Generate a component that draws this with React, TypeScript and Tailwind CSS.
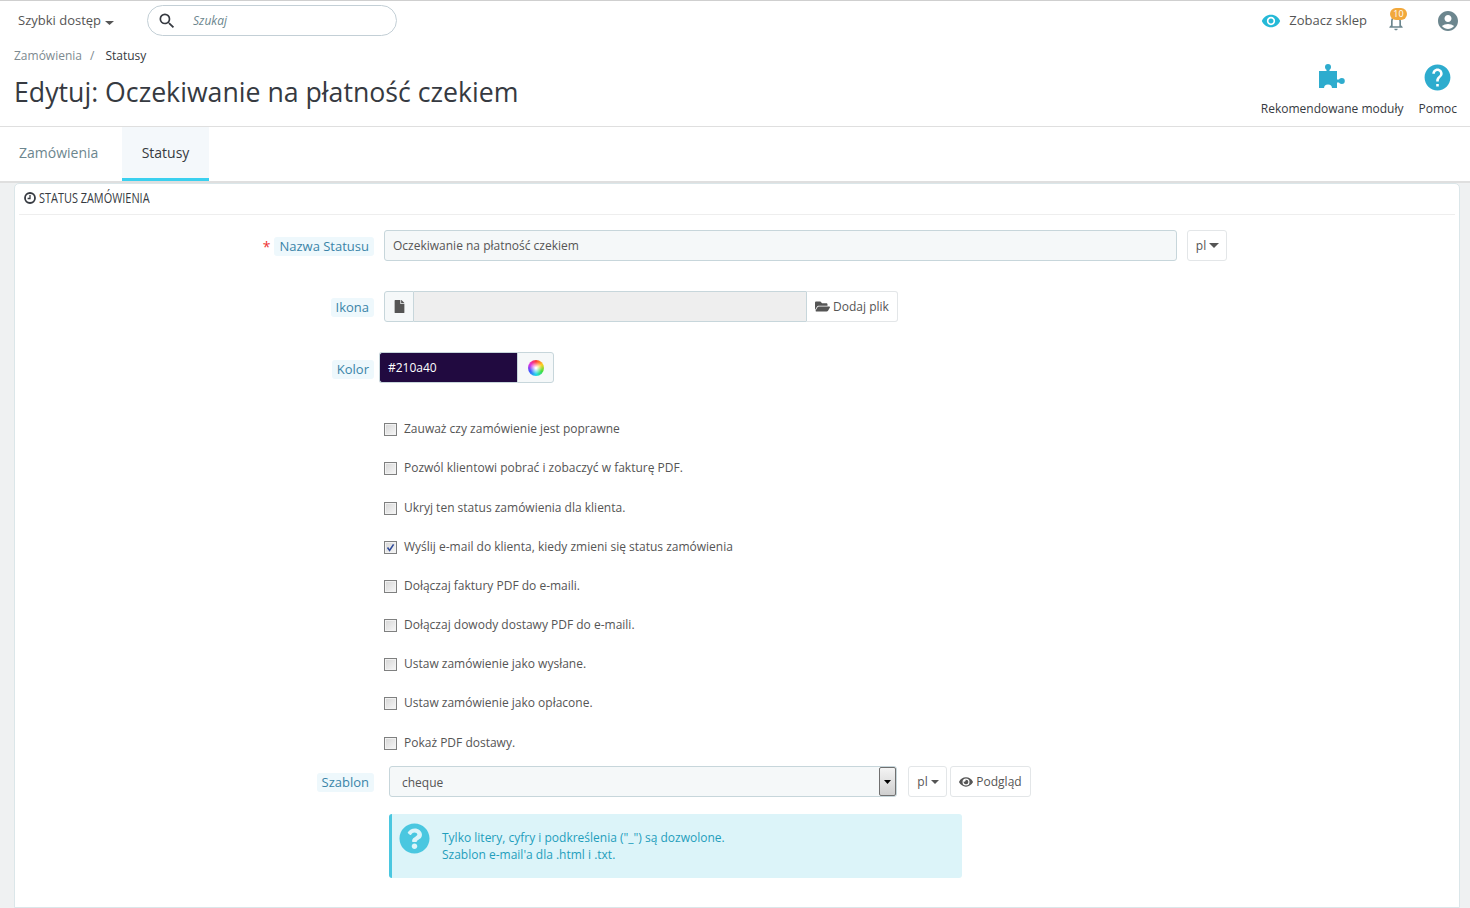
import { FaEye, FaFile, FaFolderOpen, FaQuestionCircle } from "react-icons/fa";
import { MdAccountCircle, MdHelp, MdNotificationsNone, MdRemoveRedEye, MdSearch } from "react-icons/md";

const options = [
  { label: "Zauważ czy zamówienie jest poprawne", gap: "mt-0" },
  { label: "Pozwól klientowi pobrać i zobaczyć w fakturę PDF.", gap: "mt-[25px]" },
  { label: "Ukryj ten status zamówienia dla klienta.", gap: "mt-[26px]" },
  { label: "Wyślij e-mail do klienta, kiedy zmieni się status zamówienia", gap: "mt-[25px]", checked: true },
  { label: "Dołączaj faktury PDF do e-maili.", gap: "mt-[25px]" },
  { label: "Dołączaj dowody dostawy PDF do e-maili.", gap: "mt-[25px]" },
  { label: "Ustaw zamówienie jako wysłane.", gap: "mt-[25px]" },
  { label: "Ustaw zamówienie jako opłacone.", gap: "mt-[25px]" },
  { label: "Pokaż PDF dostawy.", gap: "mt-[26px]" },
];

function Caret({ className }: { className: string }) {
  return (
    <svg viewBox="0 0 10 5" preserveAspectRatio="none" className={className} fill="currentColor">
      <path d="M0 0H10L5 5Z" />
    </svg>
  );
}

function FieldLabel({ children }: { children: string }) {
  return (
    <span className="rounded-[3px] bg-[#eef8fc] px-[5px] text-[13px] leading-[19px] text-[#3a84a8]">{children}</span>
  );
}

function CheckRow({ label, checked, gap }: { label: string; checked?: boolean; gap: string }) {
  return (
    <div className={`flex h-[14px] items-center ${gap}`}>
      <span className="relative h-[13px] w-[13px] shrink-0 border border-[#7f8080] bg-gradient-to-br from-[#d6d6d6] to-[#f7f7f7] shadow-[inset_0_0_0_1px_#f2f2f2]">
        {checked && (
          <svg viewBox="0 0 11 11" className="absolute inset-0 h-[11px] w-[11px]">
            <path d="M2.5 5.5 L4.6 8.4 L8.6 2.4" fill="none" stroke="#2e4a9a" strokeWidth="1.6" />
          </svg>
        )}
      </span>
      <span className="ml-[7px] whitespace-nowrap text-[12px] text-[#555]">{label}</span>
    </div>
  );
}

export default function App() {
  return (
    <div className="h-[908px] overflow-hidden bg-white font-['Open_Sans',sans-serif] text-[#363a41]">
      {/* pasek górny */}
      <div className="border-t border-t-[#cfcfcf]">
        <div className="flex h-[40px] items-center pl-[18px] pr-[10px]">
          <button className="flex items-center text-[13px] text-[#555]">
            Szybki dostęp
            <Caret className="ml-[4px] mt-[3px] h-[4px] w-[9px] text-[#555]" />
          </button>
          <div className="-mt-[1px] ml-[33px] flex h-[31px] w-[250px] items-center rounded-full border border-[#c3cfd6] bg-white pl-[9px]">
            <MdSearch className="h-[20px] w-[20px] text-[#363a41]" />
            <span className="ml-[16px] text-[12px] italic text-[#6c868e]">Szukaj</span>
          </div>
          <div className="ml-auto flex items-center">
            <MdRemoveRedEye className="h-[20px] w-[20px] text-[#25b9d7]" />
            <span className="ml-[8px] text-[13px] text-[#555]">Zobacz sklep</span>
            <div className="relative ml-[18px] h-[22px] w-[22px]">
              <MdNotificationsNone className="absolute left-[1px] top-[2px] h-[20px] w-[20px] text-[#6c868e]" />
              <span className="absolute left-[5px] top-[-2px] h-[12px] w-[17px] rounded-full bg-[#f2a83b] text-center text-[9px] leading-[12px] text-white">
                10
              </span>
            </div>
            <MdAccountCircle className="ml-[29px] h-[24px] w-[24px] text-[#6c868e]" />
          </div>
        </div>

        {/* nagłówek strony */}
        <div className="flex h-[86px] justify-between border-b border-b-[#dfdfdf] pl-[14px] pr-[13px]">
          <div>
            <div className="flex h-[29px] items-center text-[12px]">
              <span className="text-[#7d8a90]">Zamówienia</span>
              <span className="ml-[8px] text-[#7d8a90]">/</span>
              <span className="ml-[11px] text-[#363a41]">Statusy</span>
            </div>
            <h1 className="mt-[3px] whitespace-nowrap text-[26.7px] leading-[38px] font-normal text-[#363a41]">
              Edytuj: Oczekiwanie na płatność czekiem
            </h1>
          </div>
          <div className="flex gap-[15px] pt-[23px]">
            <div className="flex flex-col items-center">
              <svg viewBox="0 0 26 25" className="h-[25px] w-[26px] text-[#2eacce]" fill="currentColor">
                <rect x="0" y="7" width="18" height="17" />
                <circle cx="9" cy="3" r="3" />
                <rect x="7.5" y="3" width="3" height="5" />
                <circle cx="22.8" cy="17" r="3" />
                <rect x="17" y="15.5" width="4" height="3" />
                <circle cx="9" cy="24.5" r="4" fill="#ffffff" />
              </svg>
              <span className="mt-[11px] text-[12px] leading-[17px] text-[#363a41]">Rekomendowane moduły</span>
            </div>
            <div className="flex flex-col items-center">
              <MdHelp className="-mb-[4px] -mt-[2px] h-[31px] w-[31px] text-[#2eacce]" />
              <span className="mt-[11px] text-[12px] leading-[17px] text-[#363a41]">Pomoc</span>
            </div>
          </div>
        </div>

        {/* zakładki */}
        <div className="flex h-[56px] items-start border-b-2 border-b-[#dfdfdf]">
          <div className="flex h-[54px] w-[122px] items-center pb-[3px] pl-[19px] text-[14px] text-[#6c868e]">Zamówienia</div>
          <div className="flex h-[54px] w-[87px] items-center justify-center border-b-[3px] border-b-[#3ad0ef] bg-[#f4f8fb] text-[14px] text-[#363a41]">
            Statusy
          </div>
        </div>
      </div>

      {/* formularz */}
      <div className="h-[725px] bg-[#eff1f2] pl-[14px] pr-[10px]">
        <div className="h-full rounded-t-[5px] border border-[#dbe6e9] bg-white">
          <div className="mx-[4px] flex h-[31px] items-center border-b border-b-[#eeeeee] pb-[3px] pl-[5px] text-[#363a41]">
            <svg viewBox="0 0 12 12" className="h-[12px] w-[12px]" fill="none" stroke="currentColor">
              <circle cx="6" cy="6" r="5" strokeWidth="1.8" />
              <path d="M6 3 V6.5 H3.6" strokeWidth="1.3" />
            </svg>
            <span className="ml-[3px] origin-left scale-x-[0.78] whitespace-nowrap text-[14px] font-medium">STATUS ZAMÓWIENIA</span>
          </div>

          <div className="mt-[15px] flex items-center">
            <div className="flex w-[359px] justify-end pt-[1px]">
              <span className="mr-[4px] text-[14px] leading-[19px] text-[#ee3333]">*</span>
              <FieldLabel>Nazwa Statusu</FieldLabel>
            </div>
            <div className="ml-[10px] flex h-[31px] w-[793px] items-center rounded-[3px] border border-[#c7d6db] bg-[#f5f8f9] pl-[8px] text-[12px] text-[#555]">
              Oczekiwanie na płatność czekiem
            </div>
            <div className="ml-[10px] flex h-[31px] w-[40px] items-center justify-center rounded-[3px] border border-[#e3e6e8] pl-[1px] text-[12px] text-[#555]">
              pl
              <Caret className="ml-[3px] h-[5px] w-[10px]" />
            </div>
          </div>

          <div className="mt-[30px] flex items-center">
            <div className="flex w-[359px] justify-end pt-[2px]">
              <FieldLabel>Ikona</FieldLabel>
            </div>
            <div className="ml-[10px] flex h-[31px] w-[514px] rounded-[3px]">
              <div className="flex w-[30px] items-center justify-center rounded-l-[3px] border border-[#c7d6db] bg-[#f5f8f9] text-[#555]">
                <FaFile className="h-[13px] w-[13px]" />
              </div>
              <div className="w-[392px] border-y border-y-[#c7d6db] bg-[#eeeeee]" />
              <div className="flex flex-1 items-center justify-center rounded-r-[3px] border border-[#e3e6e8] border-l-[#c7d6db] text-[12px] text-[#555]">
                <FaFolderOpen className="mr-[3px] h-[15px] w-[15px]" />
                Dodaj plik
              </div>
            </div>
          </div>

          <div className="mt-[30px] flex items-center">
            <div className="flex w-[359px] justify-end pt-[3px]">
              <FieldLabel>Kolor</FieldLabel>
            </div>
            <div className="ml-[5px] flex h-[31px] w-[175px]">
              <div className="flex w-[138px] items-center rounded-l-[3px] border border-[#c7d6db] border-r-0 bg-[#210a40] pl-[8px] text-[12px] text-white">
                #210a40
              </div>
              <div className="flex flex-1 items-center justify-center rounded-r-[3px] border border-[#c7d6db] bg-[#f5f8f9]">
                <span className="h-[16px] w-[16px] rounded-full bg-[radial-gradient(circle,#ffffff_5%,transparent_55%),conic-gradient(#ff3a3a,#ffd020,#40e040,#20d8e8,#3a5cff,#e030e0,#ff3a3a)]" />
              </div>
            </div>
          </div>

          <div className="mt-[39px] pl-[369px]">
            {options.map((o) => (
              <CheckRow key={o.label} label={o.label} checked={o.checked} gap={o.gap} />
            ))}
          </div>

          <div className="mt-[16px] flex items-center">
            <div className="flex w-[359px] justify-end pt-[2px]">
              <FieldLabel>Szablon</FieldLabel>
            </div>
            <div className="ml-[15px] flex h-[31px] w-[508px] items-center rounded-[3px] border border-[#c7d6db] bg-[#f5f8f9] pl-[12px] text-[12px] text-[#555]">
              <span className="pt-[2px]">cheque</span>
              <span className="ml-auto flex h-[29px] w-[17px] items-center justify-center rounded-[2px] border border-[#707070] bg-gradient-to-b from-[#f4f4f4] to-[#cfcfcf] text-black">
                <Caret className="h-[4px] w-[7px]" />
              </span>
            </div>
            <div className="ml-[11px] flex h-[31px] w-[39px] items-center justify-center rounded-[3px] border border-[#e3e6e8] pl-[1px] text-[12px] text-[#555]">
              pl
              <Caret className="ml-[3px] h-[4px] w-[8px]" />
            </div>
            <div className="ml-[3px] flex h-[31px] w-[81px] items-center justify-center rounded-[3px] border border-[#e3e6e8] text-[12px] text-[#555]">
              <FaEye className="mr-[3px] h-[14px] w-[14px]" />
              Podgląd
            </div>
          </div>

          <div className="ml-[374px] mt-[17px] flex h-[64px] w-[573px] rounded-[3px] border-l-[3px] border-l-[#4ac7e0] bg-[#dcf4f9] pl-[7px] pt-[9px] text-[12px] leading-[17px] text-[#1f9ebc]">
            <FaQuestionCircle className="h-[31px] w-[31px] shrink-0 text-[#4ac7e0]" />
            <div className="ml-[12px] pt-[6px]">
              <div>Tylko litery, cyfry i podkreślenia ("_") są dozwolone.</div>
              <div>Szablon e-mail'a dla .html i .txt.</div>
            </div>
          </div>
        </div>
      </div>
    </div>
  );
}
